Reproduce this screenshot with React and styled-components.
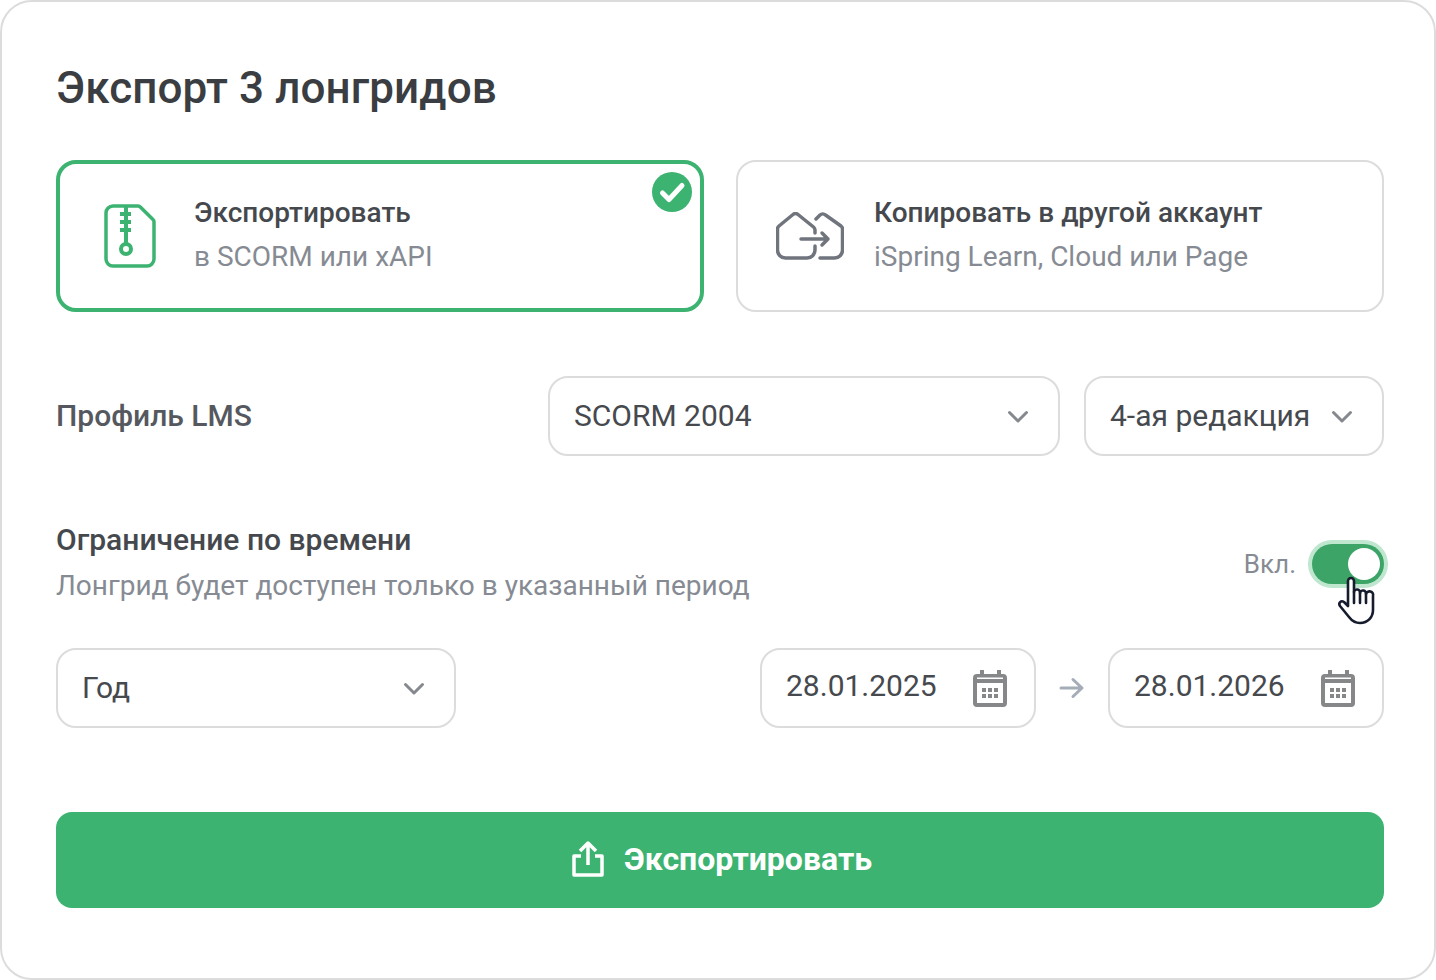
import React from "react";
import styled, { createGlobalStyle } from "styled-components";

const GlobalStyle = createGlobalStyle`
  html, body {
    margin: 0;
    padding: 0;
    background: #fff;
  }
  * {
    box-sizing: border-box;
  }
`;

const Panel = styled.div`
  position: relative;
  width: 1436px;
  height: 980px;
  padding: 61px 50px 0 54px;
  border: 2px solid #dcdcdc;
  border-radius: 32px;
  font-family: Roboto, "Noto Sans", sans-serif;
  background: #fff;
  overflow: hidden;
`;

const Title = styled.h1`
  margin: 0;
  height: 50px;
  font-size: 44px;
  line-height: 50px;
  font-weight: 500;
  letter-spacing: 0.1px;
  color: #3a3d41;
`;

const Cards = styled.div`
  display: grid;
  grid-template-columns: 648px 648px;
  gap: 32px;
  margin-top: 47px;
`;

const Card = styled.div`
  position: relative;
  display: flex;
  align-items: center;
  height: 152px;
  padding-left: ${(p) => (p.$selected ? "44px" : "38px")};
  gap: ${(p) => (p.$selected ? "38px" : "30px")};
  border: ${(p) => (p.$selected ? "4px solid #3cb371" : "2px solid #dcdcdc")};
  border-radius: 20px;
`;

const CardText = styled.div`
  display: flex;
  flex-direction: column;
  gap: 10px;
  padding-bottom: 2px;
`;

const CardTitle = styled.div`
  font-size: 28px;
  line-height: 34px;
  font-weight: 500;
  color: #45484d;
`;

const CardHint = styled.div`
  font-size: 28px;
  line-height: 34px;
  color: #868b93;
`;

const CheckBadge = styled.svg`
  position: absolute;
  top: 8px;
  right: 8px;
  width: 40px;
  height: 40px;
`;

const LmsRow = styled.div`
  display: flex;
  align-items: center;
  margin-top: 64px;
`;

const FieldLabel = styled.div`
  width: 492px;
  padding-bottom: 2px;
  font-size: 30px;
  font-weight: 500;
  color: #55595f;
`;

const Select = styled.div`
  display: flex;
  align-items: center;
  justify-content: space-between;
  width: ${(p) => p.$width}px;
  height: 80px;
  padding: 0 28px 2px 24px;
  border: 2px solid #dcdcdc;
  border-radius: 20px;
  font-size: 30px;
  color: #46494e;
  & + & {
    margin-left: 24px;
  }
`;

const ChevronIcon = styled.svg`
  margin-top: 3px;
`;

const LimitRow = styled.div`
  display: flex;
  align-items: center;
  justify-content: space-between;
  margin-top: 67px;
`;

const LimitText = styled.div`
  display: flex;
  flex-direction: column;
  gap: 12px;
`;

const LimitTitle = styled.div`
  font-size: 30px;
  line-height: 34px;
  font-weight: 500;
  color: #45484d;
`;

const LimitHint = styled.div`
  font-size: 28px;
  line-height: 34px;
  color: #868b93;
`;

const ToggleWrap = styled.div`
  position: relative;
  display: flex;
  align-items: center;
  gap: 16px;
  margin-top: 2px;
`;

const ToggleLabel = styled.div`
  font-size: 26px;
  color: #868b93;
`;

const Toggle = styled.div`
  display: flex;
  align-items: center;
  justify-content: flex-end;
  width: 72px;
  height: 40px;
  padding: 4px;
  border-radius: 20px;
  background: #3ca466;
  box-shadow: 0 0 0 4px #bfe6cf;
`;

const Knob = styled.div`
  width: 32px;
  height: 32px;
  border-radius: 50%;
  background: #fff;
`;

const Cursor = styled.svg`
  position: absolute;
  right: 8px;
  top: 32px;
  width: 40px;
  height: 50px;
`;

const DateRow = styled.div`
  display: flex;
  align-items: center;
  margin-top: 45px;
`;

const DateField = styled.div`
  display: flex;
  align-items: center;
  justify-content: space-between;
  width: 276px;
  height: 80px;
  padding: 0 27px 0 24px;
  border: 2px solid #dcdcdc;
  border-radius: 20px;
  font-size: 30px;
  color: #46494e;
`;

const DateValue = styled.span`
  margin-bottom: 6px;
`;

const Spacer = styled.div`
  flex: 1;
`;

const ArrowBox = styled.div`
  display: flex;
  align-items: center;
  justify-content: center;
  width: 72px;
`;

const SubmitButton = styled.button`
  display: flex;
  align-items: center;
  justify-content: center;
  gap: 20px;
  width: 1328px;
  height: 96px;
  margin-top: 84px;
  padding: 0 0 2px 4px;
  border: none;
  border-radius: 16px;
  background: #3cb371;
  color: #fff;
  font-family: inherit;
  font-size: 32px;
  font-weight: 700;
`;

function Chevron() {
  return (
    <ChevronIcon width="24" height="24" viewBox="0 0 24 24" fill="none" stroke="#85898f" strokeWidth="3" strokeLinecap="round" strokeLinejoin="round">
      <path d="M3.5 7.5 12 16l8.5-8.5" />
    </ChevronIcon>
  );
}

function CalendarIcon() {
  return (
    <svg width="34" height="37" viewBox="0 0 34 37" fill="#858789">
      <path d="M7 0h4v4h13V0h4v4h2a4 4 0 0 1 4 4v25a4 4 0 0 1-4 4H4a4 4 0 0 1-4-4V8a4 4 0 0 1 4-4h3V0Zm-3 7.500V9h26V7.500H4Zm0 5.500v20h26V13H4Z" fillRule="evenodd" />
      <path d="M9 18h4v4H9zM15 18h4v4h-4zM21 18h4v4h-4zM9 24h4v4H9zM15 24h4v4h-4zM21 24h4v4h-4z" />
    </svg>
  );
}

export default function App() {
  return (
    <>
      <GlobalStyle />
      <Panel>
        <Title>Экспорт 3 лонгридов</Title>
        <Cards>
          <Card $selected>
            <svg width="52" height="64" viewBox="0 0 52 64" fill="none" stroke="#3cb371" strokeWidth="3.5" strokeLinejoin="round">
              <path d="M9 2h25a3 3 0 0 1 2.300 1L49 15.500a3 3 0 0 1 1 2.200V55a7 7 0 0 1-7 7H9a7 7 0 0 1-7-7V9a7 7 0 0 1 7-7Z" />
              <path d="M22 2v38" strokeWidth="4" />
              <path d="M16 10h11M16 18h11M16 26h11" strokeWidth="4" />
              <circle cx="22" cy="45" r="5" strokeWidth="4" />
            </svg>
            <CardText>
              <CardTitle>Экспортировать</CardTitle>
              <CardHint>в SCORM или xAPI</CardHint>
            </CardText>
            <CheckBadge viewBox="0 0 40 40">
              <circle cx="20" cy="20" r="20" fill="#3cb371" />
              <path d="M10.500 21 17 27.500 30 13.500" fill="none" stroke="#fff" strokeWidth="5" strokeLinecap="round" strokeLinejoin="round" />
            </CheckBadge>
          </Card>
          <Card>
            <svg width="68" height="48" viewBox="0 0 68 48" fill="none" stroke="#70757d" strokeWidth="3.500" strokeLinecap="round" strokeLinejoin="round">
              <path d="M39 21v-3a4 4 0 0 0-1.500-3L22 2.500a4 4 0 0 0-5 0L3 14a4 4 0 0 0-1.500 3v21a8 8 0 0 0 8 8H31a8 8 0 0 0 8-8v-4" />
              <path d="M40 7l4-4a4 4 0 0 1 5.500 0L65 14a4 4 0 0 1 1.500 3v21a8 8 0 0 1-8 8H44" />
              <path d="M25 27h27M46 21l6 6-6 6" />
            </svg>
            <CardText>
              <CardTitle>Копировать в другой аккаунт</CardTitle>
              <CardHint>iSpring Learn, Cloud или Page</CardHint>
            </CardText>
          </Card>
        </Cards>
        <LmsRow>
          <FieldLabel>Профиль LMS</FieldLabel>
          <Select $width={512}>
            SCORM 2004
            <Chevron />
          </Select>
          <Select $width={300}>
            4-ая редакция
            <Chevron />
          </Select>
        </LmsRow>
        <LimitRow>
          <LimitText>
            <LimitTitle>Ограничение по времени</LimitTitle>
            <LimitHint>Лонгрид будет доступен только в указанный период</LimitHint>
          </LimitText>
          <ToggleWrap>
            <ToggleLabel>Вкл.</ToggleLabel>
            <Toggle>
              <Knob />
            </Toggle>
            <Cursor viewBox="0 0 40 50" fill="#fff" stroke="#161c2d" strokeWidth="2.600" strokeLinejoin="round" strokeLinecap="round">
              <path d="M12 5a3 3 0 0 1 6 0v11a3 3 0 0 1 6 1 3 3 0 0 1 6 1 3 3 0 0 1 7 2v14c0 7-5 13-13 13-5 0-8-2-11-6L4 30c-2-3 1-6 4-4l4 4V5Z" />
              <path d="M18 16v11M24 17v10M30 18v9" />
            </Cursor>
          </ToggleWrap>
        </LimitRow>
        <DateRow>
          <Select $width={400}>
            Год
            <Chevron />
          </Select>
          <Spacer />
          <DateField>
            <DateValue>28.01.2025</DateValue>
            <CalendarIcon />
          </DateField>
          <ArrowBox>
            <svg width="26" height="22" viewBox="0 0 26 22" fill="none" stroke="#a4adb8" strokeWidth="3" strokeLinecap="round" strokeLinejoin="round">
              <path d="M2 11h21M14 2.500 23 11l-9 8.500" />
            </svg>
          </ArrowBox>
          <DateField>
            <DateValue>28.01.2026</DateValue>
            <CalendarIcon />
          </DateField>
        </DateRow>
        <SubmitButton>
          <svg width="32" height="36" viewBox="0 0 32 36" fill="none" stroke="#fff" strokeWidth="3.500" strokeLinejoin="round">
            <path d="M16 24V3M8 10l8-8 8 8" />
            <path d="M9 15H2v19h28V15h-7" />
          </svg>
          Экспортировать
        </SubmitButton>
      </Panel>
    </>
  );
}
